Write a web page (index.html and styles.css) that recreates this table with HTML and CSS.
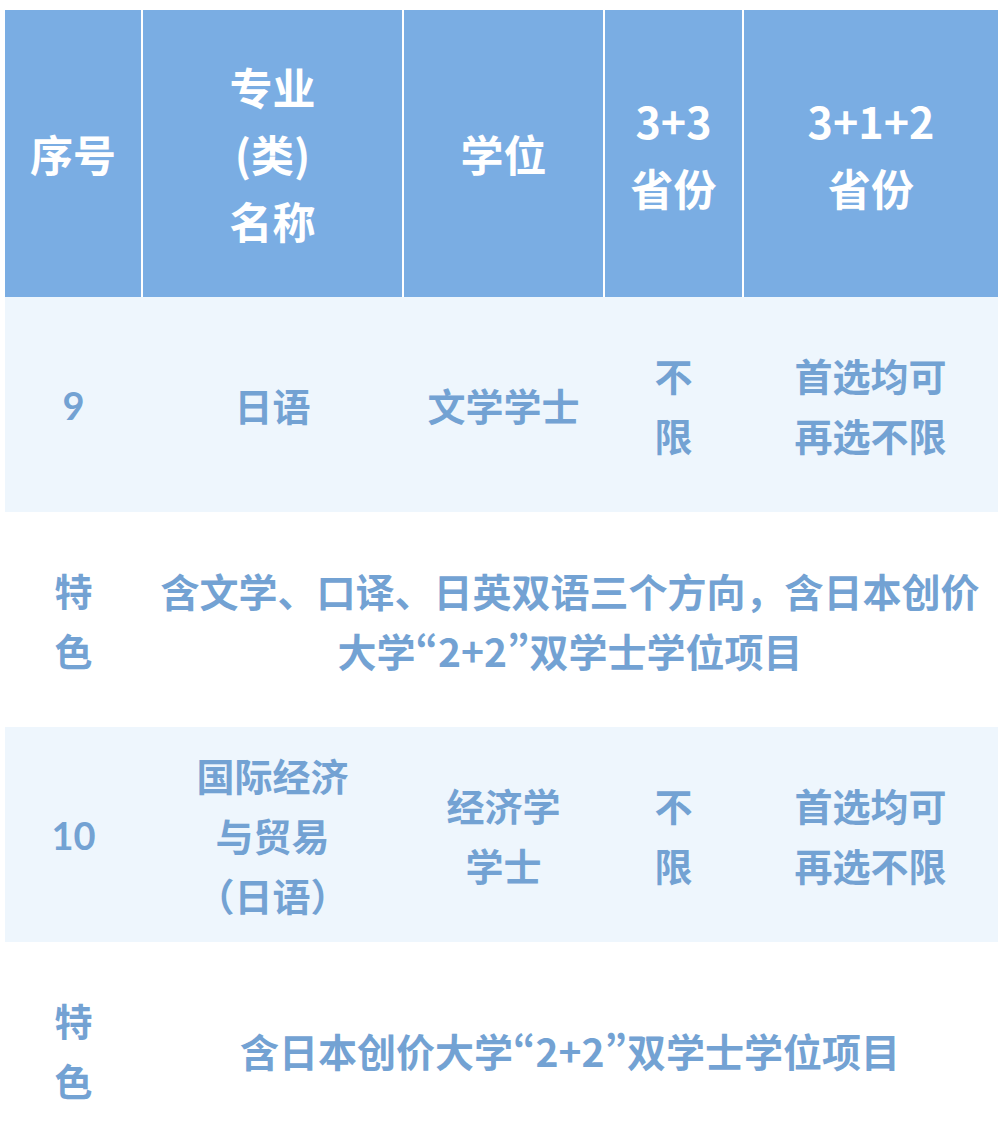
FILE: index.html
```html
<!DOCTYPE html>
<html lang="zh-CN">
<head>
<meta charset="utf-8">
<title>专业介绍</title>
<link rel="stylesheet" href="styles.css">
</head>
<body>
<div class="wrap">
<table class="majors">
  <colgroup>
    <col class="c1"><col class="c2"><col class="c3"><col class="c4"><col class="c5">
  </colgroup>
  <thead>
    <tr>
      <th>序号</th>
      <th>专业<br>(类)<br>名称</th>
      <th>学位</th>
      <th>3+3<br>省份</th>
      <th>3+1+2<br>省份</th>
    </tr>
  </thead>
  <tbody>
    <tr class="row">
      <td class="num">9</td>
      <td>日语</td>
      <td>文学学士</td>
      <td>不<br>限</td>
      <td>首选均可<br>再选不限</td>
    </tr>
    <tr class="feat">
      <td>特<br>色</td>
      <td colspan="4" class="desc">含文学、口译、日英双语三个方向，含日本创价大学<span class="pw">“2+2”</span>双学士学位项目</td>
    </tr>
    <tr class="row">
      <td class="num">10</td>
      <td>国际经济<br>与贸易<br>（日语）</td>
      <td>经济学<br>学士</td>
      <td>不<br>限</td>
      <td>首选均可<br>再选不限</td>
    </tr>
    <tr class="feat">
      <td>特<br>色</td>
      <td colspan="4" class="desc">含日本创价大学<span class="pw">“2+2”</span>双学士学位项目</td>
    </tr>
  </tbody>
</table>
</div>
</body>
</html>
```
FILE: styles.css
```css
html, body {
  margin: 0;
  padding: 0;
  background: #ffffff;
}

.wrap {
  padding: 10px 7px 0 5px;
}

.majors {
  width: 993px;
  border-collapse: collapse;
  table-layout: fixed;
  font-family: "Noto Sans CJK SC", "Noto Sans", sans-serif;
  font-weight: 700;
  text-align: center;
}

.c1 { width: 137px; }
.c2 { width: 261px; }
.c3 { width: 201px; }
.c4 { width: 139px; }
.c5 { width: 255px; }

.majors th {
  height: 287px;
  padding: 0;
  background: #7aade3;
  color: #ffffff;
  font-size: 43px;
  line-height: 67px;
  vertical-align: middle;
  border-left: 2px solid #ffffff;
}

.majors th:first-child {
  border-left: none;
}

.majors td {
  padding: 0 14px;
  color: #73a2d3;
  font-size: 38px;
  line-height: 60px;
  vertical-align: middle;
}

.row td {
  height: 215px;
  background: #eef6fd;
}

.feat td {
  height: 215px;
  background: #ffffff;
}

.num {
  font-family: "Lato", "Noto Sans", sans-serif;
  font-size: 36px;
}

.majors td.desc {
  padding: 0 14px;
  font-size: 39px;
}

.pw {
  font-feature-settings: "pwid";
}
```
